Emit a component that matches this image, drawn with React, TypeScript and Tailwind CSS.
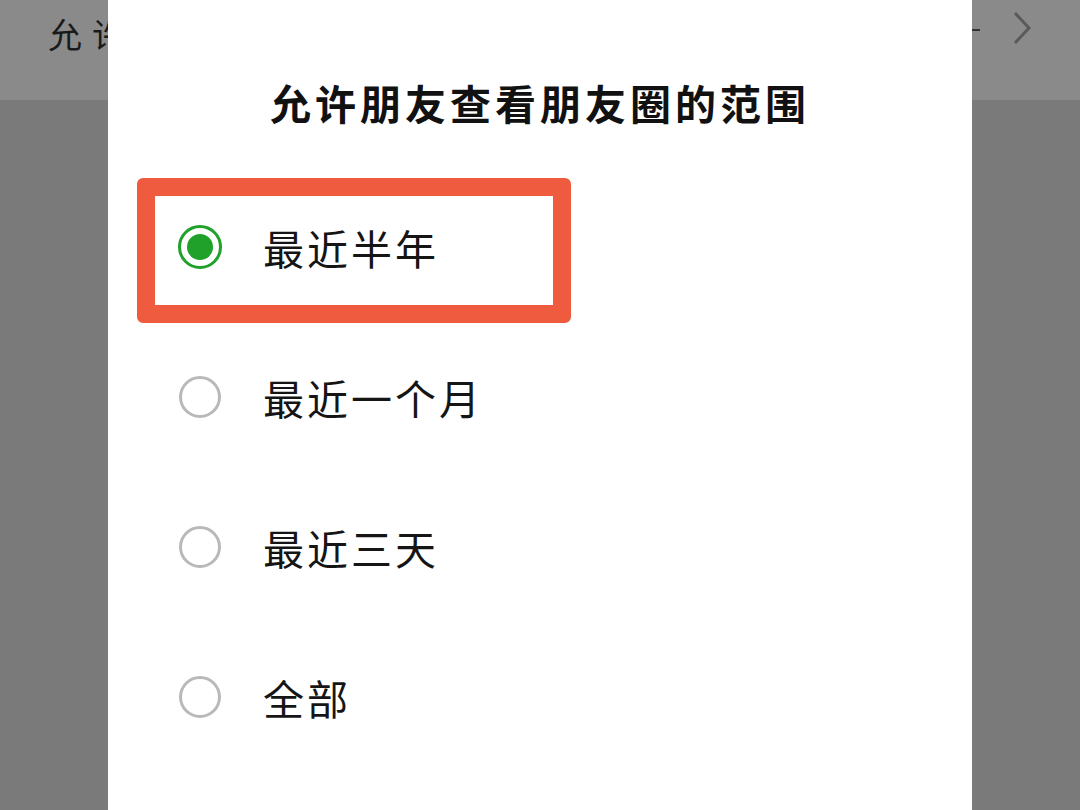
import React from "react";

const font = { fontFamily: '"Noto Sans CJK SC", "Noto Sans", sans-serif' };

function Radio({ checked }: { checked?: boolean }) {
  if (checked) {
    return (
      <div className="w-[44px] h-[44px] rounded-full border-[3px] border-[#1fa12a] flex items-center justify-center shrink-0">
        <div className="w-[26px] h-[26px] rounded-full bg-[#1fa12a]" />
      </div>
    );
  }
  return <div className="w-[42px] h-[42px] rounded-full border-[3px] border-[#b9b9b9] shrink-0 mx-[1px]" />;
}

function Option({ label, checked, highlight }: { label: string; checked?: boolean; highlight?: boolean }) {
  return (
    <div className="relative h-[150px] flex items-center pl-[70px]">
      {highlight && (
        <div className="absolute left-[29px] top-[6px] w-[434px] h-[145px] border-[18px] border-[#ee5b3f] rounded-[6px]" />
      )}
      <Radio checked={checked} />
      <span className="ml-[41px] text-[41px] leading-none text-[#151515] tracking-[3px]">{label}</span>
    </div>
  );
}

export default function App() {
  return (
    <div className="relative w-[1080px] h-[810px] overflow-hidden bg-[#7a7a7a]" style={font}>
      <div className="h-[100px] bg-[#8a8a8a] flex items-start justify-between pl-[48px] pr-[46px] pt-[10px]">
        <span className="text-[34px] leading-[48px] text-[#1a1a1a] tracking-[10px]">允许</span>
        <div className="flex items-center gap-[30px] pt-[2px]">
          <div className="w-[8px] h-[2px] bg-[#333] mt-[2px]" />
          <svg width="24" height="36" viewBox="0 0 24 36" className="mt-[-2px]">
            <path d="M5 3 L19 18 L5 33" fill="none" stroke="#5a5a5a" strokeWidth="3" />
          </svg>
        </div>
      </div>
      <div className="absolute left-[108px] top-0 w-[864px] h-[810px] bg-white">
        <div className="h-[172px] flex items-center justify-center pt-[32px]">
          <h1 className="text-[41px] font-bold leading-none text-[#111] tracking-[4px]">允许朋友查看朋友圈的范围</h1>
        </div>
        <Option label="最近半年" checked highlight />
        <Option label="最近一个月" />
        <Option label="最近三天" />
        <Option label="全部" />
      </div>
    </div>
  );
}
